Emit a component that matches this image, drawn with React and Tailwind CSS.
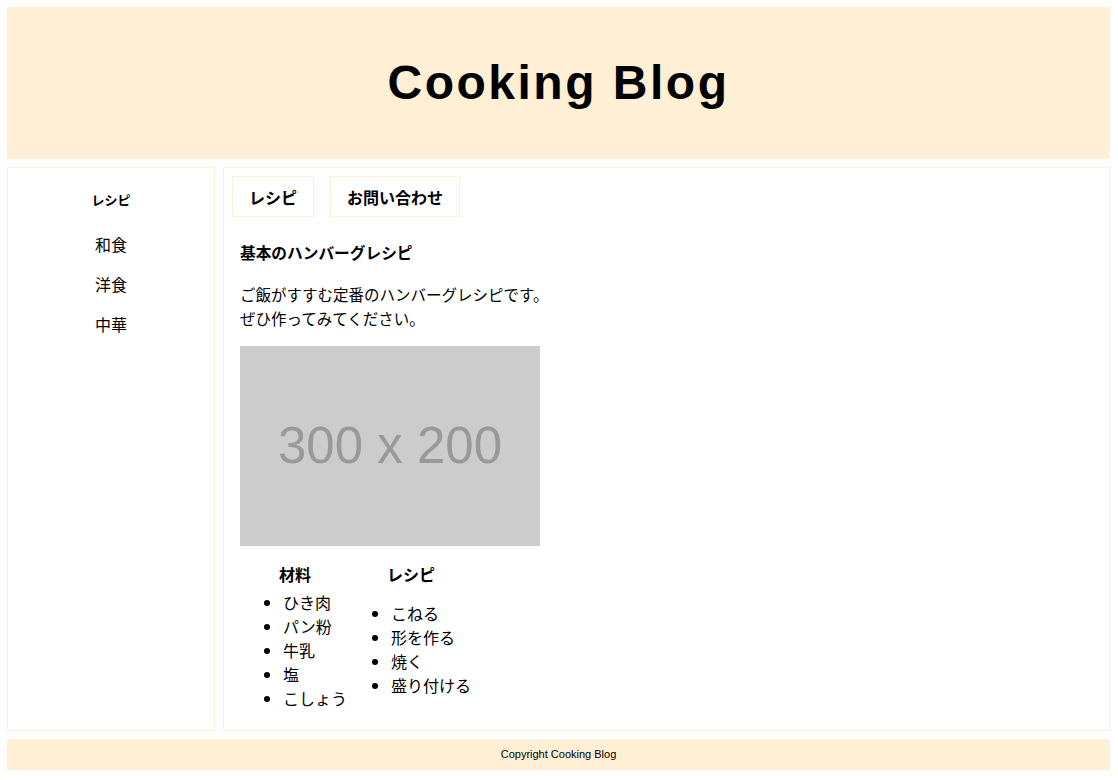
import React from 'react';

const jp = { fontFamily: '"Noto Sans CJK JP", "Noto Sans", sans-serif' };

const App = () => {
  return (
    <div className="min-h-[780px] bg-white pl-[7px] pr-[8px] pt-[7px] flex flex-col gap-2 text-black" style={jp}>
      <header className="h-[152px] bg-[#ffefd5] flex items-center justify-center">
        <h1 className="text-[48px] font-bold tracking-[2.5px] font-['Liberation_Sans',Arial,sans-serif]">Cooking Blog</h1>
      </header>

      <div className="flex gap-2 h-[564px]">
        <aside className="w-[208px] border border-[#ffefd5] flex flex-col items-center pt-[23px]">
          <h2 className="text-[13px] font-bold leading-[18px]">レシピ</h2>
          <ul className="mt-[23px] flex flex-col gap-4 text-[16px] leading-[24px] text-center">
            <li>和食</li>
            <li>洋食</li>
            <li>中華</li>
          </ul>
        </aside>

        <main className="flex-1 border border-[#ffefd5] pt-2 pl-2">
          <nav className="flex gap-4">
            <div className="border border-[#ffefd5] h-[41px] px-4 flex items-center text-[16px] font-bold">レシピ</div>
            <div className="border border-[#ffefd5] h-[41px] px-4 flex items-center text-[16px] font-bold">お問い合わせ</div>
          </nav>

          <div className="pl-2">
            <h3 className="mt-6 text-[15.7px] font-bold leading-[24px]">基本のハンバーグレシピ</h3>
            <p className="mt-[17px] text-[15.5px] leading-[24px]">
              ご飯がすすむ定番のハンバーグレシピです。
              <br />
              ぜひ作ってみてください。
            </p>
            <div className="mt-4 w-[300px] h-[200px] bg-[#cccccc] flex items-center justify-center">
              <span className="text-[51px] text-[#999999] font-['Liberation_Sans',Arial,sans-serif]">300 x 200</span>
            </div>

            <div className="mt-[16px] flex pl-[3px] gap-1 text-[16px] leading-[24px]">
              <div className="w-[104px]">
                <h4 className="font-bold text-center">材料</h4>
                <ul className="mt-1 pl-10 list-disc">
                  <li>ひき肉</li>
                  <li>パン粉</li>
                  <li>牛乳</li>
                  <li>塩</li>
                  <li>こしょう</li>
                </ul>
              </div>
              <div className="w-[120px]">
                <h4 className="font-bold text-center">レシピ</h4>
                <ul className="mt-[15px] pl-10 list-disc">
                  <li>こねる</li>
                  <li>形を作る</li>
                  <li>焼く</li>
                  <li>盛り付ける</li>
                </ul>
              </div>
            </div>
          </div>
        </main>
      </div>

      <footer className="h-[31px] bg-[#ffefd5] flex items-center justify-center text-[11px] font-['Liberation_Sans',Arial,sans-serif]">
        Copyright Cooking Blog
      </footer>
    </div>
  );
};

export default App;
